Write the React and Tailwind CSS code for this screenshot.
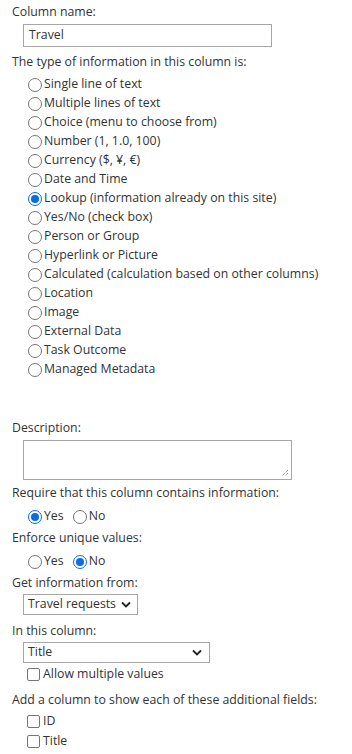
import React, { useState } from 'react';

const types = [
  'Single line of text',
  'Multiple lines of text',
  'Choice (menu to choose from)',
  'Number (1, 1.0, 100)',
  'Currency ($, ¥, €)',
  'Date and Time',
  'Lookup (information already on this site)',
  'Yes/No (check box)',
  'Person or Group',
  'Hyperlink or Picture',
  'Calculated (calculation based on other columns)',
  'Location',
  'Image',
  'External Data',
  'Task Outcome',
  'Managed Metadata',
];

const Radio = ({ checked }) => (
  <span
    className={
      'inline-flex h-[14px] w-[14px] shrink-0 items-center justify-center rounded-full border bg-white ' +
      (checked ? 'border-[#0b6ee0]' : 'border-[#767676]')
    }
  >
    {checked && <span className="h-[8px] w-[8px] rounded-full bg-[#0b6ee0]" />}
  </span>
);

const Check = () => (
  <span className="inline-block h-[13px] w-[13px] shrink-0 rounded-[2px] border border-[#767676] bg-white" />
);

const Chevron = () => (
  <svg width="10" height="7" viewBox="0 0 10 7" className="shrink-0">
    <path d="M1 1.5 L5 5.5 L9 1.5" fill="none" stroke="#222" strokeWidth="1.8" />
  </svg>
);

const Label = ({ children, className = '' }) => (
  <div className={'flex h-[19px] items-center whitespace-nowrap ' + className}>{children}</div>
);

const App = () => {
  const [type, setType] = useState(6);

  return (
    <div
      className="min-h-[754px] bg-white pl-[12px] text-[12.3px] text-[#333333]"
      style={{ fontFamily: '"Open Sans", "Noto Sans", sans-serif' }}
    >
      <Label className="mt-[3px]">Column name:</Label>
      <div className="ml-[11px] mt-[2px] flex h-[23px] w-[249px] items-center border border-[#a6a6a6] px-[5px]">
        Travel
      </div>

      <Label className="mt-[6px]">The type of information in this column is:</Label>
      <div className="mt-[3px]">
        {types.map((t, i) => (
          <div
            key={t}
            className="ml-[16px] flex h-[19px] cursor-default items-center gap-[2px] whitespace-nowrap"
            onClick={() => setType(i)}
          >
            <Radio checked={type === i} />
            <span>{t}</span>
          </div>
        ))}
      </div>

      <Label className="mt-[40px]">Description:</Label>
      <div className="relative ml-[11px] mt-[2px] h-[40px] w-[269px] border border-[#a6a6a6]">
        <svg width="8" height="8" viewBox="0 0 8 8" className="absolute bottom-[2px] right-[2px]">
          <path d="M7 1 L1 7 M7 4 L4 7" stroke="#777" strokeWidth="1" strokeDasharray="1 1" />
        </svg>
      </div>

      <Label className="mt-[4px]">Require that this column contains information:</Label>
      <div className="ml-[16px] mt-[4px] flex h-[19px] items-center">
        <Radio checked />
        <span className="ml-[2px]">Yes</span>
        <span className="ml-[9px] flex"><Radio /></span>
        <span className="ml-[2px]">No</span>
      </div>

      <Label className="mt-[3px]">Enforce unique values:</Label>
      <div className="ml-[16px] mt-[4px] flex h-[19px] items-center">
        <Radio />
        <span className="ml-[2px]">Yes</span>
        <span className="ml-[9px] flex"><Radio checked /></span>
        <span className="ml-[2px]">No</span>
      </div>

      <Label className="mt-[3px]">Get information from:</Label>
      <div className="ml-[11px] mt-[1px] flex h-[21px] w-[115px] items-center justify-between whitespace-nowrap border border-[#a6a6a6] pl-[4px] pr-[6px]">
        <span>Travel requests</span>
        <Chevron />
      </div>

      <Label className="mt-[7px]">In this column:</Label>
      <div className="ml-[11px] mt-[1px] flex h-[21px] w-[187px] items-center justify-between border border-[#a6a6a6] pl-[4px] pr-[7px]">
        <span>Title</span>
        <Chevron />
      </div>
      <div className="ml-[15px] mt-[2px] flex h-[19px] items-center gap-[3px]">
        <Check />
        <span>Allow multiple values</span>
      </div>

      <Label className="mt-[7px]">Add a column to show each of these additional fields:</Label>
      <div className="mt-[1px]">
        {['ID', 'Title'].map((f) => (
          <div key={f} className="ml-[15px] flex h-[20px] items-center gap-[3px]">
            <Check />
            <span>{f}</span>
          </div>
        ))}
      </div>
    </div>
  );
};

export default App;
